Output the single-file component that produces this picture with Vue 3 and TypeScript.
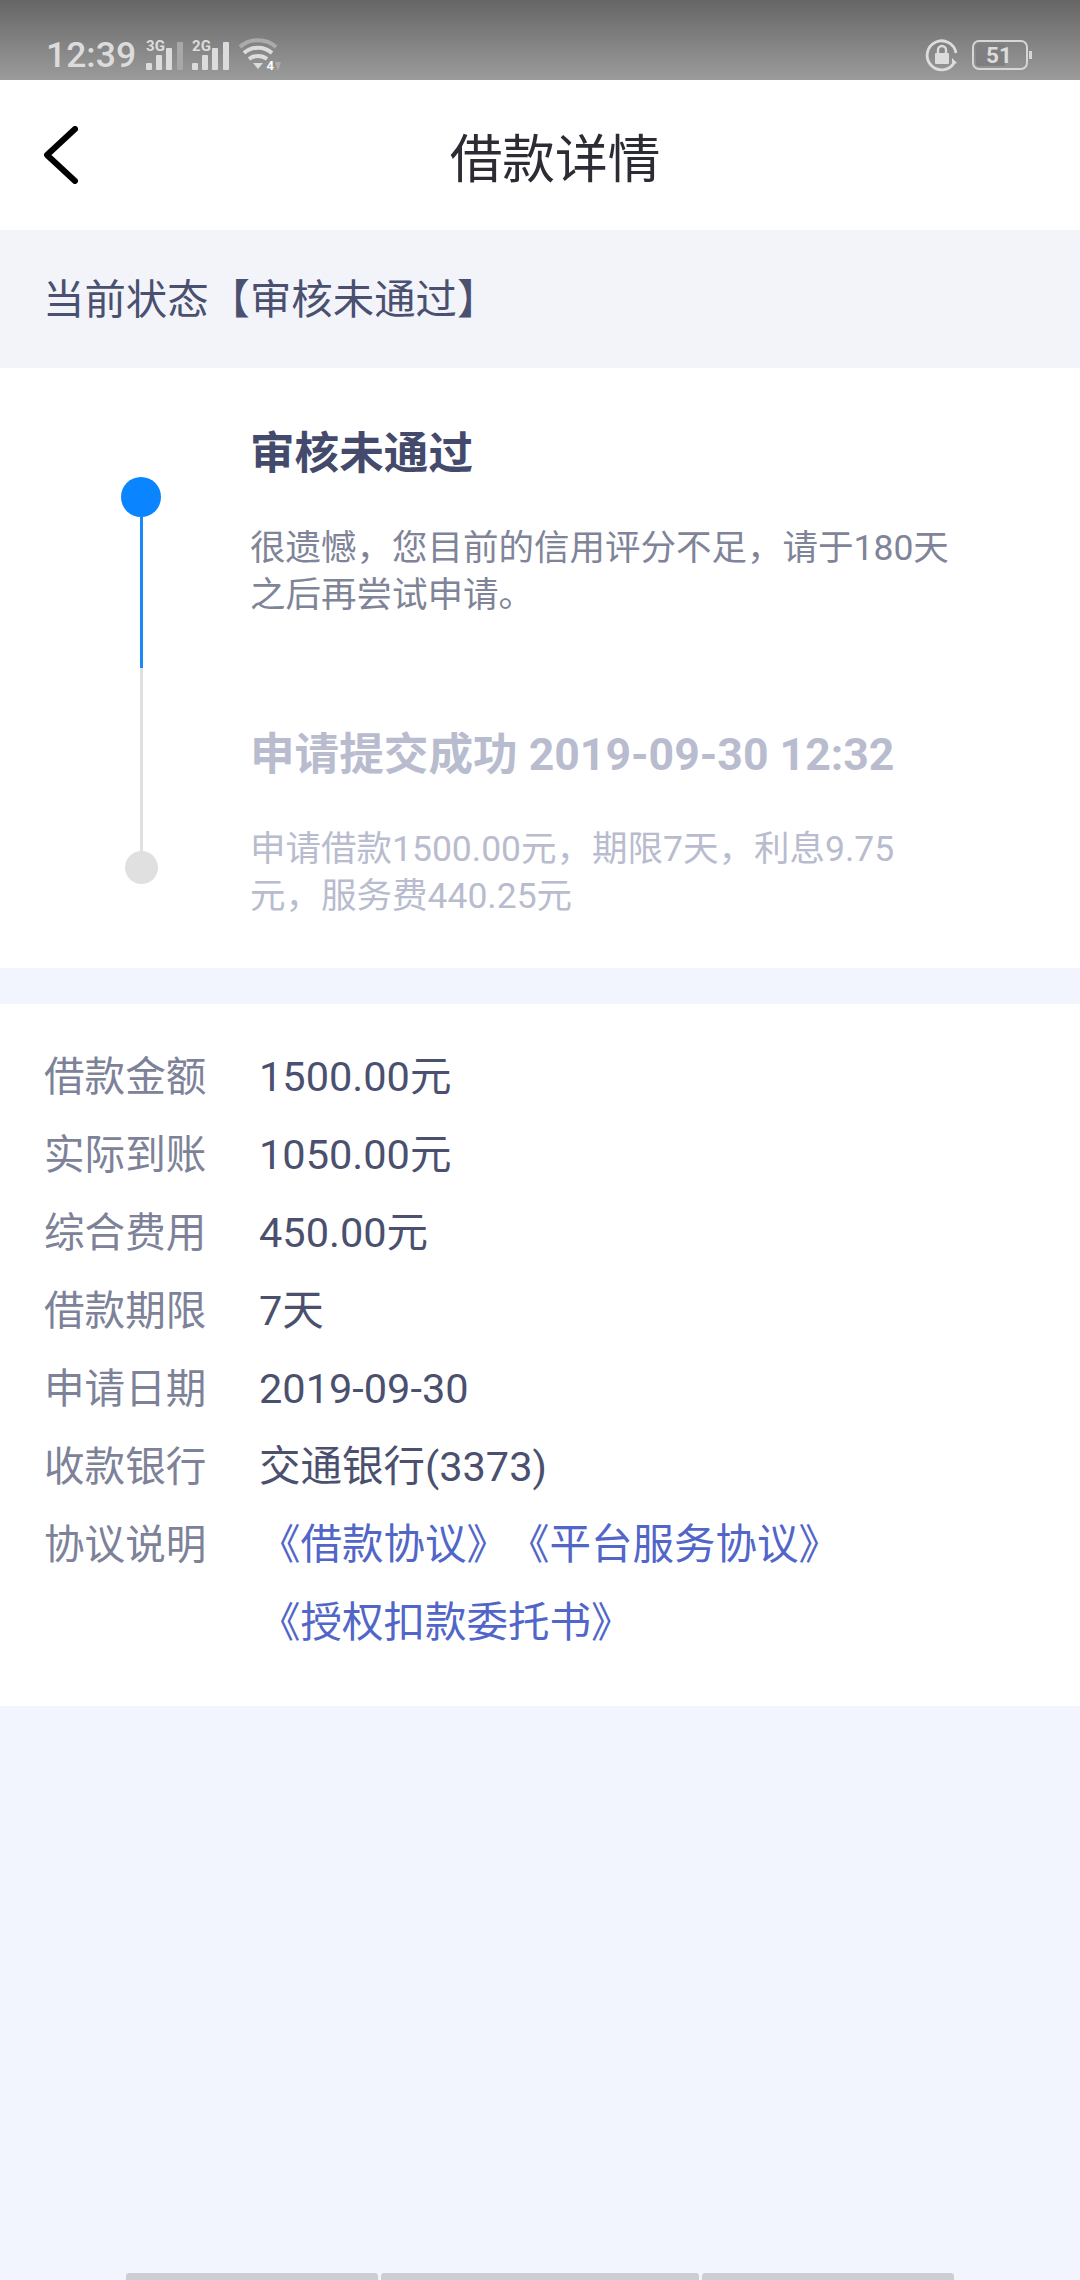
<script setup lang="ts">
const rows: { label: string; value: string }[] = [
  { label: '借款金额', value: '1500.00元' },
  { label: '实际到账', value: '1050.00元' },
  { label: '综合费用', value: '450.00元' },
  { label: '借款期限', value: '7天' },
  { label: '申请日期', value: '2019-09-30' },
  { label: '收款银行', value: '交通银行(3373)' },
]
const links: string[] = ['《借款协议》', '《平台服务协议》', '《授权扣款委托书》']
const bars: number[] = [252, 318, 252]
</script>

<template>
  <div class="page">
    <header class="status">
      <div class="status-left">
        <span class="time">12:39</span>
        <span class="net">
          <span class="net-label">3G</span>
          <svg class="net-bars" width="37" height="28" viewBox="0 0 37 28"><g fill="#dcdcdc"><rect x="0" y="21" width="6" height="7" rx="1"/><rect x="10" y="13" width="6" height="15" rx="1"/><rect x="20" y="6" width="6" height="22" rx="1"/><rect x="31" y="0" width="6" height="28" rx="1" fill="#a8a8a8"/></g></svg>
        </span>
        <span class="net">
          <span class="net-label">2G</span>
          <svg class="net-bars" width="37" height="28" viewBox="0 0 37 28"><g fill="#dcdcdc"><rect x="0" y="21" width="6" height="7" rx="1"/><rect x="10" y="13" width="6" height="15" rx="1"/><rect x="20" y="6" width="6" height="22" rx="1"/><rect x="31" y="0" width="6" height="28" rx="1"/></g></svg>
        </span>
        <span class="wifi">
          <svg class="wifi-arcs" width="44" height="34" viewBox="0 0 44 34">
            <path d="M2 9 C12 0 28 0 38 9" fill="none" stroke="#ababab" stroke-width="4"/>
            <path d="M6 15 C14 8 26 8 34 15" fill="none" stroke="#dcdcdc" stroke-width="4"/>
            <path d="M11 21 C16 17 24 17 29 21" fill="none" stroke="#dcdcdc" stroke-width="4"/>
            <path d="M15 25 L25 25 L20 31 Z" fill="#dcdcdc"/>
            <path d="M37 24 L43 24 L40 33 Z" fill="#ababab"/>
          </svg>
          <span class="wifi-four">4</span>
        </span>
      </div>
      <div class="status-right">
        <svg width="34" height="34" viewBox="0 0 34 34">
          <path d="M29 25 A14.5 14.5 0 1 1 31 15" fill="none" stroke="#dcdcdc" stroke-width="2.8"/>
          <path d="M27 20 L32 25 L27 27 Z" fill="#dcdcdc"/>
          <rect x="10" y="15" width="14" height="11" rx="1" fill="#dcdcdc"/>
          <path d="M13 15 V12 A4 4 0 0 1 21 12 V15" fill="none" stroke="#dcdcdc" stroke-width="2.4"/>
        </svg>
        <div class="battery">
          <div class="battery-body">
            <span class="battery-fill"></span>
            <span class="battery-text">51</span>
          </div>
          <span class="battery-nub"></span>
        </div>
      </div>
    </header>

    <nav class="nav">
      <svg class="back" width="34" height="58" viewBox="0 0 34 58">
        <path d="M31 3 L3 29 L31 55" fill="none" stroke="#000" stroke-width="6" stroke-linecap="round" stroke-linejoin="round"/>
      </svg>
      <h1 class="nav-title">借款详情</h1>
    </nav>

    <div class="banner">当前状态【审核未通过】</div>

    <section class="timeline">
      <div class="rail">
        <span class="dot dot-on"></span>
        <span class="seg seg-on"></span>
        <span class="seg seg-off"></span>
        <span class="dot dot-off"></span>
      </div>
      <div class="steps">
        <div class="step">
          <h2 class="step-title">审核未通过</h2>
          <p class="step-desc">很遗憾，您目前的信用评分不足，请于180天<br>之后再尝试申请。</p>
        </div>
        <div class="step step-muted">
          <h2 class="step-title">申请提交成功 2019-09-30 12:32</h2>
          <p class="step-desc">申请借款1500.00元，期限7天，利息9.75<br>元，服务费440.25元</p>
        </div>
      </div>
    </section>

    <section class="details">
      <div v-for="row in rows" :key="row.label" class="row">
        <span class="label">{{ row.label }}</span>
        <span class="value">{{ row.value }}</span>
      </div>
      <div class="row">
        <span class="label">协议说明</span>
        <div class="links">
          <span v-for="link in links" :key="link" class="link">{{ link }}</span>
        </div>
      </div>
    </section>

    <footer class="foot">
      <span v-for="(w, i) in bars" :key="i" class="foot-bar" :style="{ width: w + 'px' }"></span>
    </footer>
  </div>
</template>

<style>
html, body { margin: 0; padding: 0; background: #f1f4fd; }
</style>

<style scoped>
.page {
  width: 1080px;
  height: 2280px;
  display: flex;
  flex-direction: column;
  overflow: hidden;
  background: #f2f5fe;
  font-family: "Roboto", "Noto Sans CJK SC", sans-serif;
}
.status {
  height: 80px;
  flex: none;
  display: flex;
  justify-content: space-between;
  align-items: flex-start;
  padding: 0 48px 0 46px;
  box-sizing: border-box;
  background: linear-gradient(#666666, #9b9b9b);
  color: #dcdcdc;
}
.status-left {
  display: flex;
  align-items: flex-end;
  height: 72px;
}
.time {
  font-size: 35.5px;
  font-weight: 500;
  line-height: 40px;
  margin-right: 10px;
  margin-bottom: -3px;
}
.net {
  display: grid;
  height: 30px;
  margin-right: 9px;
  margin-bottom: 2px;
}
.net-label,
.net-bars { grid-area: 1 / 1; }
.net-label {
  align-self: start;
  font-size: 15px;
  line-height: 13px;
  font-weight: 700;
  white-space: nowrap;
}
.net-bars { align-self: end; }
.wifi { display: grid; width: 44px; height: 34px; }
.wifi-arcs,
.wifi-four { grid-area: 1 / 1; }
.wifi-four {
  align-self: end;
  justify-self: end;
  margin-right: 8px;
  font-size: 13px;
  line-height: 13px;
  font-weight: 700;
  color: #ffffff;
}
.status-right {
  display: flex;
  align-items: center;
  gap: 13px;
  height: 34px;
  margin-top: 38px;
}
.battery { display: flex; align-items: center; }
.battery-body {
  position: relative;
  width: 56px;
  height: 30px;
  box-sizing: border-box;
  border: 2.5px solid #d6d6d6;
  border-radius: 7px;
  display: flex;
  align-items: center;
  justify-content: center;
}
.battery-fill {
  position: absolute;
  left: 2px;
  top: 2px;
  bottom: 2px;
  width: 29px;
  background: #7f7f7f;
  border-radius: 2px;
}
.battery-text {
  position: relative;
  font-size: 22.5px;
  font-weight: 700;
  line-height: 25px;
  margin-right: 2px;
}
.battery-nub {
  width: 3px;
  height: 8px;
  margin-left: 1px;
  background: #d6d6d6;
}
.nav {
  height: 150px;
  flex: none;
  display: flex;
  align-items: center;
  padding-left: 44px;
  box-sizing: border-box;
  background: #ffffff;
}
.back { flex: none; }
.nav-title {
  flex: 1;
  margin: 0;
  padding-right: 48px;
  text-align: center;
  font-size: 52.7px;
  font-weight: 400;
  color: #2c2c34;
}
.banner {
  height: 138px;
  flex: none;
  display: flex;
  align-items: center;
  padding: 0 0 6px 43px;
  box-sizing: border-box;
  background: #f3f4fa;
  font-size: 41.4px;
  color: #4a5070;
}
.timeline {
  flex: none;
  display: flex;
  background: #ffffff;
  padding: 55px 0 48px 121px;
  gap: 89px;
}
.rail {
  width: 40px;
  margin-top: 54px;
  display: flex;
  flex-direction: column;
  align-items: center;
}
.dot { display: block; border-radius: 50%; flex: none; }
.dot-on { width: 40px; height: 40px; background: #0a84ff; }
.dot-off { width: 33px; height: 33px; background: #e0e0e0; }
.seg { display: block; width: 3px; flex: none; }
.seg-on { height: 151px; background: #1a88f5; }
.seg-off { height: 183px; background: #e0e0e0; }
.steps {
  display: flex;
  flex-direction: column;
  gap: 105px;
}
.step-title {
  margin: 0;
  font-size: 44.6px;
  line-height: 62px;
  font-weight: 700;
  color: #444a6b;
}
.step-desc {
  margin: 40px 0 0;
  font-size: 35.5px;
  line-height: 47px;
  color: #7f8499;
  white-space: nowrap;
}
.step-muted .step-title { color: #b8bcce; }
.step-muted .step-desc { color: #b8bcce; }
.details {
  flex: none;
  margin-top: 36px;
  padding: 34px 0 44px 44px;
  background: #ffffff;
}
.row {
  display: flex;
  font-size: 41.5px;
  line-height: 78px;
}
.label {
  width: 215px;
  flex: none;
  font-size: 40.6px;
  color: #7d8299;
}
.value { color: #4a506e; }
.links {
  display: flex;
  flex-wrap: wrap;
  width: 600px;
}
.link { color: #5166c8; white-space: nowrap; }
.foot {
  margin-top: auto;
  height: 7px;
  display: flex;
  justify-content: center;
  gap: 3px;
}
.foot-bar {
  display: block;
  height: 7px;
  background: #cdcdd4;
  border-radius: 3px 3px 0 0;
}
</style>
